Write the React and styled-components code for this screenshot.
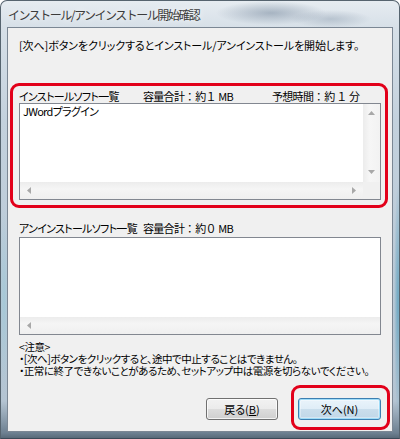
import React from "react";
import styled, { createGlobalStyle, css } from "styled-components";

const GlobalStyle = createGlobalStyle`
  html, body { margin: 0; padding: 0; background: #ffffff; }
  body { width: 400px; height: 439px; overflow: hidden; }
  * { box-sizing: border-box; }
`;

const jp = `"Noto Sans CJK JP", "Noto Sans", "DejaVu Sans", sans-serif`;

const Window = styled.div`
  width: 400px;
  height: 439px;
  display: flex;
  flex-direction: column;
  padding-bottom: 6px;
  border-radius: 7px 7px 0 0;
  border: 1px solid #56646f;
  border-bottom-color: #3c4a58;
  background:
    radial-gradient(ellipse 55px 12px at 270px 12px, rgba(120, 138, 158, 0.55), transparent),
    radial-gradient(ellipse 40px 9px at 330px 18px, rgba(140, 156, 174, 0.45), transparent),
    radial-gradient(ellipse 5px 90px at 3px 300px, rgba(160, 200, 215, 0.8), transparent),
    radial-gradient(ellipse 4px 120px at 397px 300px, rgba(90, 160, 190, 0.8), transparent),
    linear-gradient(180deg, #e6ecf1 0px, #d7e0e8 26px, #c3d1dd 120px, #b4c4d2 400px, #6d8091 432px, #50616f 439px);
  overflow: hidden;
`;

const TitleBar = styled.div`
  height: 26px;
  flex: none;
  display: flex;
  align-items: center;
  padding-left: 7px;
`;

const Title = styled.span`
  font-family: ${jp};
  font-size: 12px;
  letter-spacing: -1.5px;
  color: #3b3b3b;
  text-shadow: 0 0 6px rgba(255, 255, 255, 0.9);
`;

const Client = styled.div`
  flex: 1;
  margin: 0 6px;
  display: flex;
  flex-direction: column;
  background: #f0f0f0;
  border: 1px solid #7b8794;
  padding-bottom: 1px;
  font-family: ${jp};
  font-size: 11px;
  font-feature-settings: "palt" 1;
  color: #000;
`;

const Intro = styled.div`
  margin-top: 11px;
  padding-left: 11px;
  line-height: 13px;
  letter-spacing: -0.1px;
  white-space: nowrap;
`;

const Section = styled.div`
  margin: ${(p) => p.$top}px 4px 0 2px;
  border: 3px solid ${(p) => (p.$highlight ? "#e2001a" : "transparent")};
  border-radius: 9px;
  padding: 4px 4px ${(p) => (p.$highlight ? 5 : 0)}px 6px;
  ${(p) =>
    !p.$highlight &&
    css`
      border-bottom-width: 0;
    `}
  display: flex;
  flex-direction: column;
  gap: ${(p) => p.$gap}px;
`;

const LabelRow = styled.div`
  display: grid;
  grid-template-columns: ${(p) => p.$cols};
  line-height: 13px;
  letter-spacing: -0.7px;
  white-space: pre;
`;

const Fw = styled.span`
  font-feature-settings: "palt" 0;
  letter-spacing: 0;
`;

const ListBox = styled.div`
  height: ${(p) => p.$h}px;
  border: 1px solid #828790;
  background: #ffffff;
  display: grid;
  grid-template-columns: ${(p) => (p.$vscroll ? "1fr 17px" : "1fr")};
  grid-template-rows: 1fr 17px;
`;

const ListContent = styled.div`
  padding: 1px 3px;
  line-height: 13px;
  letter-spacing: -0.7px;
`;

const VScroll = styled.div`
  background: linear-gradient(90deg, #ececec, #f6f6f6 40%, #f2f2f2);
  display: flex;
  flex-direction: column;
  justify-content: space-between;
  align-items: center;
  padding: 7px 0 8px;
`;

const HScroll = styled.div`
  grid-column: 1 / 2;
  background: linear-gradient(180deg, #ececec, #f5f5f5 40%, #efefef);
  display: flex;
  justify-content: space-between;
  align-items: center;
  padding: 0 ${(p) => (p.$right ? 7 : 0)}px 0 7px;
`;

const HScrollWide = styled(HScroll)`
  grid-column: 1 / -1;
`;

const Corner = styled.div`
  background: #f0f0f0;
`;

const ArrowSvg = styled.svg`
  display: block;
  width: ${(p) => (p.$vertical ? 7 : 4)}px;
  height: ${(p) => (p.$vertical ? 4 : 7)}px;
  fill: #a8a8a8;
`;

const Arrow = ({ dir }) => {
  const vertical = dir === "up" || dir === "down";
  const pts = {
    up: "0,4 3.5,0 7,4",
    down: "0,0 3.5,4 7,0",
    left: "4,0 0,3.5 4,7",
    right: "0,0 4,3.5 0,7",
  }[dir];
  return (
    <ArrowSvg $vertical={vertical} viewBox={vertical ? "0 0 7 4" : "0 0 4 7"}>
      <polygon points={pts} />
    </ArrowSvg>
  );
};

const Notes = styled.div`
  margin-top: 6px;
  padding-left: 11px;
  display: flex;
  flex-direction: column;
  font-size: 10.5px;
  letter-spacing: -0.45px;
  white-space: nowrap;
`;

const NoteLine = styled.div`
  height: 12px;
  line-height: 12px;
`;

const ButtonRow = styled.div`
  margin-top: auto;
  margin-right: 2px;
  display: flex;
  justify-content: flex-end;
  align-items: flex-end;
  gap: 13px;
`;

const HighlightBox = styled.div`
  border: 3px solid #e2001a;
  border-radius: 9px;
  padding: 10px 6px 7px 4px;
`;

const Button = styled.button`
  width: ${(p) => p.$w}px;
  height: 22px;
  margin-bottom: ${(p) => p.$mb || 0}px;
  padding: 0;
  border-radius: 3px;
  font-family: ${jp};
  font-size: 11px;
  font-feature-settings: "palt" 1;
  color: #000;
  cursor: default;
  border: 1px solid #707070;
  background: linear-gradient(180deg, #f2f2f2 0%, #ebebeb 50%, #dddddd 50%, #cfcfcf 100%);
  box-shadow: inset 0 0 0 1px rgba(255, 255, 255, 0.75);
  ${(p) =>
    p.$default &&
    css`
      border-color: #3c7fb1;
      background: linear-gradient(180deg, #eaf4fb 0%, #dfedf7 50%, #cadeec 50%, #c0d7e8 100%);
      box-shadow: inset 0 0 0 1px #9fdcf8, inset 0 0 0 2px rgba(255, 255, 255, 0.35);
    `}
`;

const Key = styled.span`
  text-decoration: ${(p) => (p.$u ? "underline" : "none")};
`;

export default function App() {
  return (
    <>
      <GlobalStyle />
      <Window>
        <TitleBar>
          <Title>インストール/アンインストール開始確認</Title>
        </TitleBar>
        <Client>
          <Intro>[次へ]ボタンをクリックするとインストール/アンインストールを開始します。</Intro>

          <Section $highlight $top={31} $gap={0}>
            <LabelRow $cols="124px 129px auto">
              <span>インストールソフト一覧</span>
              <span>
                容量合計<Fw>：</Fw>約<Fw>１</Fw> MB
              </span>
              <span>
                予想時間<Fw>：</Fw>約 <Fw>１</Fw> 分
              </span>
            </LabelRow>
            <ListBox $h={97} $vscroll>
              <ListContent>JWordプラグイン</ListContent>
              <VScroll>
                <Arrow dir="up" />
                <Arrow dir="down" />
              </VScroll>
              <HScroll $right>
                <Arrow dir="left" />
                <Arrow dir="right" />
              </HScroll>
              <Corner />
            </ListBox>
          </Section>

          <Section $top={7} $gap={2}>
            <LabelRow $cols="124px auto">
              <span>アンインストールソフト一覧</span>
              <span>
                容量合計<Fw>：</Fw>約<Fw>０</Fw> MB
              </span>
            </LabelRow>
            <ListBox $h={98}>
              <ListContent />
              <HScrollWide>
                <Arrow dir="left" />
              </HScrollWide>
            </ListBox>
          </Section>

          <Notes>
            <NoteLine>&lt;注意&gt;</NoteLine>
            <NoteLine>・[次へ]ボタンをクリックすると、途中で中止することはできません。</NoteLine>
            <NoteLine>・正常に終了できないことがあるため、セットアップ中は電源を切らないでください。</NoteLine>
          </Notes>

          <ButtonRow>
            <Button $w={72} $mb={10}>
              戻る(<Key $u>B</Key>)
            </Button>
            <HighlightBox>
              <Button $w={83} $default>
                次へ(<Key>N</Key>)
              </Button>
            </HighlightBox>
          </ButtonRow>
        </Client>
      </Window>
    </>
  );
}
